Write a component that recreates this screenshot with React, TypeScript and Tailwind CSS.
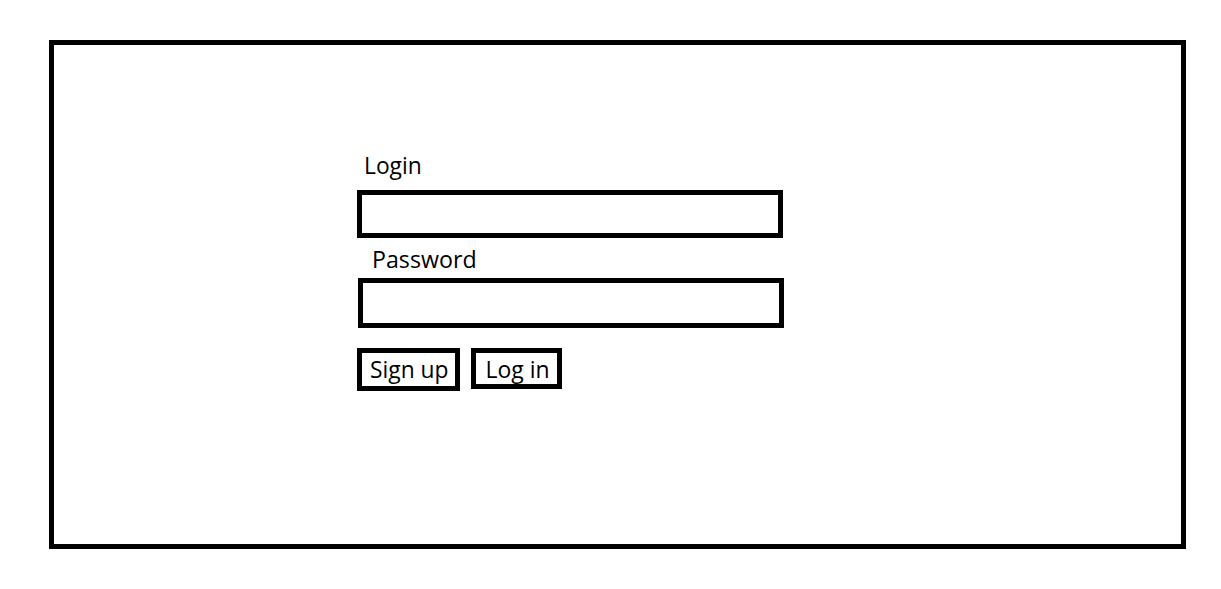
export default function App() {
  return (
    <div className="h-[589px] w-[1221px] bg-white pt-10 pl-[49px] text-black">
      <main className="h-[509px] w-[1137px] border-5 border-black pt-[104px] pl-[303px] font-['Open_Sans',sans-serif] text-[24px] leading-8">
        <form className="flex flex-col items-start" onSubmit={(e) => e.preventDefault()}>
          <label htmlFor="login" className="ml-[7px] h-[41px]">
            <span className="inline-block origin-left scale-x-[0.95]">Login</span>
          </label>
          <input id="login" className="h-12 w-[426px] border-5 border-black bg-white px-2 outline-none" />
          <label htmlFor="password" className="ml-[15px] h-10 pt-[5px]">
            <span className="inline-block origin-left scale-x-[0.967]">Password</span>
          </label>
          <input id="password" type="password" className="ml-px h-[50px] w-[426px] border-5 border-black bg-white px-2 outline-none" />
          <div className="mt-5 flex items-start gap-[11px]">
            <button type="button" className="flex h-[43px] w-[103px] items-center justify-center border-5 border-black pb-[2px] pl-[2px] whitespace-nowrap">
              <span className="scale-x-[0.95]">Sign up</span>
            </button>
            <button type="submit" className="flex h-[41px] w-[91px] items-center justify-center border-5 border-black pl-[2px] whitespace-nowrap">
              <span className="scale-x-[0.955]">Log in</span>
            </button>
          </div>
        </form>
      </main>
    </div>
  );
}
